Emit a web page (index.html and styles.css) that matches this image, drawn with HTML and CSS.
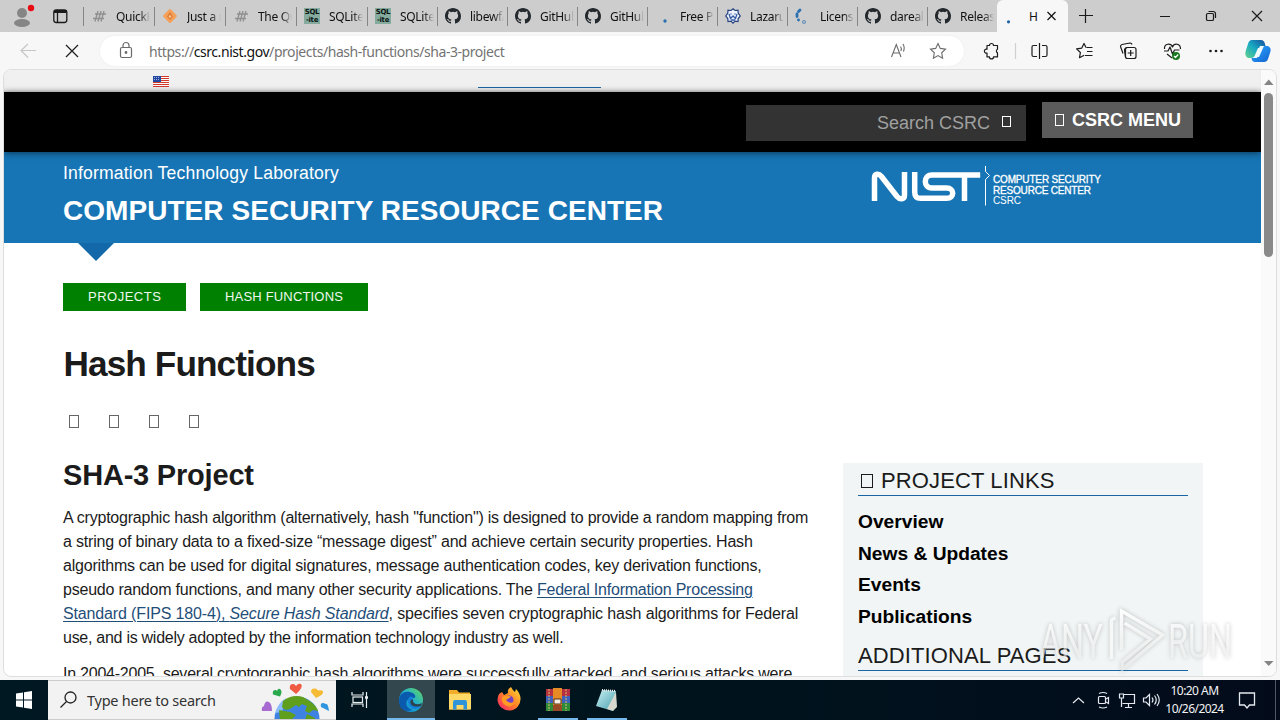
FILE: index.html
```html
<!DOCTYPE html>
<html lang="en">
<head>
<meta charset="utf-8">
<title>Hash Functions | CSRC</title>
<link rel="stylesheet" href="styles.css">
</head>
<body>
<svg width="0" height="0" class="defs">
  <defs>
    <symbol id="github" viewBox="0 0 16 16"><path fill="#24292e" d="M8 0C3.58 0 0 3.58 0 8c0 3.54 2.29 6.53 5.47 7.59.4.07.55-.17.55-.38 0-.19-.01-.82-.01-1.49-2.01.37-2.53-.49-2.69-.94-.09-.23-.48-.94-.82-1.13-.28-.15-.68-.52-.01-.53.63-.01 1.08.58 1.23.82.72 1.21 1.87.87 2.33.66.07-.52.28-.87.51-1.07-1.78-.2-3.64-.89-3.64-3.95 0-.87.31-1.59.82-2.15-.08-.2-.36-1.02.08-2.12 0 0 .67-.21 2.2.82a7.6 7.6 0 0 1 4 0c1.53-1.04 2.2-.82 2.2-.82.44 1.1.16 1.92.08 2.12.51.56.82 1.27.82 2.15 0 3.07-1.87 3.75-3.65 3.95.29.25.54.73.54 1.48 0 1.07-.01 1.93-.01 2.2 0 .21.15.46.55.38A8.01 8.01 0 0 0 16 8c0-4.42-3.58-8-8-8z"/></symbol>
    <symbol id="hash" viewBox="0 0 16 16"><path d="M4 6h11M2 10.500h11M7 3L4 13.500M10 3l-3 10.500M13 3l-3 10.500" stroke="#8f8f8f" stroke-width="1.300" fill="none"/></symbol>
  </defs>
</svg>
<div class="window">
  <div class="tabbar">
    <svg class="profile" width="36" height="32" viewBox="0 0 36 32"><circle cx="22" cy="13" r="5" fill="#858585"/><ellipse cx="22" cy="23" rx="8" ry="4" fill="#858585"/><circle cx="31" cy="8" r="3.200" fill="#e80c14"/></svg>
    <svg class="workspace" width="47" height="32" viewBox="36 0 47 32" fill="none" stroke="#1a1a1a" stroke-width="1.300"><rect x="53.800" y="9.800" width="13" height="12.700" rx="2.500"/><path d="M54 11.500h12.500" stroke-width="3"/><path d="M57.500 12v10"/></svg>
    <div class="tab w71"><svg class="fav"><use href="#hash"/></svg><span>QuickH</span></div>
    <div class="tab w71"><svg class="fav" viewBox="0 0 16 16"><rect x="2.700" y="2.700" width="10.600" height="10.600" rx="1.500" transform="rotate(45 8 8)" fill="#f3a15c"/><path d="M8 4l3 4.500-3 3.500-3-3.500z" fill="#e07a2d"/><circle cx="8" cy="8.500" r="1.300" fill="#f9c898"/></svg><span>Just a m</span></div>
    <div class="tab w71"><svg class="fav"><use href="#hash"/></svg><span>The Qui</span></div>
    <div class="tab w71"><div class="fav sql">SQL<br>-ite</div><span>SQLite F</span></div>
    <div class="tab w70"><div class="fav sql">SQL<br>-ite</div><span>SQLite F</span></div>
    <div class="tab w70"><svg class="fav"><use href="#github"/></svg><span>libewf/l</span></div>
    <div class="tab w70"><svg class="fav"><use href="#github"/></svg><span>GitHub</span></div>
    <div class="tab w70"><svg class="fav"><use href="#github"/></svg><span>GitHub</span></div>
    <div class="tab w70"><svg class="fav" viewBox="0 0 16 16"><circle cx="10" cy="13" r="1.700" fill="#2a6fb0"/></svg><span>Free Pa</span></div>
    <div class="tab w70"><svg class="fav" viewBox="0 0 16 16"><path d="M8 .8l2 1.700 3-.3.200 3L15.300 8l-2.100 2.500-.2 3-3-.3L8 15.200l-2-2-3 .3-.2-3L.7 8l2.100-2.800.2-3 3 .3z" fill="#eef3fd" stroke="#27427f" stroke-width="1.200"/><path d="M4 6l1.500 4.500L8 8l2.500 2.500L12 6M5.500 6h1M9.500 6h1M6 12h4" stroke="#3459a4" stroke-width="1.300" fill="none"/></svg><span>Lazarus</span></div>
    <div class="tab w70"><svg class="fav" viewBox="0 0 16 16" fill="none" stroke="#2a6fb0" stroke-width="2.800" stroke-linecap="round"><path d="M5 2L3.500 3.500M2 6v2.500M3.500 12v.1"/><circle cx="9" cy="14" r=".4"/></svg><span>License</span></div>
    <div class="tab w70"><svg class="fav"><use href="#github"/></svg><span>dareali</span></div>
    <div class="tab w70"><svg class="fav"><use href="#github"/></svg><span>Release</span></div>
    <div class="tab active"><svg class="fav" viewBox="0 0 16 16"><circle cx="3.500" cy="13.800" r="1.600" fill="#1f63a8"/></svg><span>H</span><svg width="12" height="12" viewBox="0 0 12 12" stroke="#111" stroke-width="1.200"><path d="M1.500 2l8 8M9.500 2l-8 8"/></svg></div>
    <svg class="controls" width="212" height="32" viewBox="1068 0 212 32" fill="none" stroke="#1a1a1a" stroke-width="1.200"><path d="M1079 15.500h14M1085.500 9v14M1160 16.500h10M1252 11l10 10M1262 11l-10 10"/><rect x="1206.500" y="13.500" width="7" height="7" rx="1.300"/><path d="M1208.500 11.500h4.500a2.500 2.500 0 0 1 2.500 2.500v4"/></svg>
  </div>
  <div class="toolbar">
    <svg width="100" height="37" viewBox="0 32 100 37" fill="none"><path d="M36 50.500H21M28 44l-7 6.500 7 7" stroke="#c6c6c6" stroke-width="1.200"/><path d="M66 45l12 12M78 45l-12 12" stroke="#222" stroke-width="1.300"/></svg>
    <div class="address">
      <svg width="16" height="20" viewBox="0 0 16 20" fill="none" stroke="#6b6b6b" stroke-width="1.200"><rect x="2.500" y="6.500" width="11" height="10" rx="1.500"/><path d="M5 6V4.500a3 3 0 0 1 6 0V6"/><circle cx="8" cy="11.500" r=".8" fill="#6b6b6b"/></svg>
      <span class="url">https://<b>csrc.nist.gov</b>/projects/hash-functions/sha-3-project</span>
      <svg width="76" height="30" viewBox="888 36 76 30" fill="none" stroke="#6b6b6b" stroke-width="1.100"><path d="M891.500 57l4.800-12.500L901 57M893 53h6.500M900.500 46.500a4 4 0 0 1 .3 4.500M903 44a8 8 0 0 1 .4 7.500"/><path d="M938 43.500l2.300 4.900 5.200.7-3.800 3.700.9 5.400-4.600-2.600-4.600 2.600.9-5.400-3.800-3.700 5.200-.7z"/></svg>
    </div>
    <svg width="316" height="37" viewBox="964 32 316 37" fill="none" stroke="#1c1c1c" stroke-width="1.200" stroke-linejoin="round">
      <path d="M987 45.500h2.500a2 2 0 0 1 4 0h4v3.800a2 2 0 0 0 0 3.600v4h-4a2 2 0 0 1-4 0H987V53a2 2 0 1 1 0-3.800z"/>
      <path d="M1015.500 43v16" stroke="#d0d0d0"/>
      <path d="M1037 45.500h-3.500a1.500 1.500 0 0 0-1.500 1.500v8a1.500 1.500 0 0 0 1.500 1.500h3.500M1042 45.500h3.500a1.500 1.500 0 0 1 1.500 1.500v8a1.500 1.500 0 0 1-1.500 1.500h-3.500M1039.500 43v16"/>
      <path d="M1086 47.500l-2-4-2.200 4.600-5.200.8 3.800 3.600-.9 5.200 4.700-2.400M1086.500 47.500h6M1087 51.500h5.500M1085 55.500h7.500"/>
      <path d="M1123 53.500l-2.500-7a2 2 0 0 1 1.500-2l8-1.500a2 2 0 0 1 2 1.500M1125.500 57l-1-6.500a3 3 0 0 1 3-3"/><rect x="1125.500" y="47.500" width="10.500" height="11" rx="2"/><path d="M1130.700 50v6M1127.700 53h6"/>
      <path d="M1164.500 49c-.5-6 6.500-6 8-2 1.500-4 8-4 8 2M1167 54l5 4M1164 51h4l2-4 2.500 7 2-4h5"/><circle cx="1176" cy="56" r="4" fill="#18771c" stroke="none"/><path d="M1174 56l1.500 1.500 2.700-3" stroke="#fff"/>
      <g fill="#1c1c1c" stroke="none"><circle cx="1210.500" cy="51" r="1.300"/><circle cx="1216" cy="51" r="1.300"/><circle cx="1221.500" cy="51" r="1.300"/></g>
      <g stroke="none"><path d="M1252 40h9q3 0 4 4l1 4h-8l-3 7q-1 3-4 3h-3q-4-2-2-8l2-6q1-4 4-4z" fill="url(#cop1)"/><path d="M1264 62h-9q-3 0-3.500-4l5.500 0 3-9q1-3 4-3h4q4 2 2 7l-2 6q-1 3-4 3z" fill="url(#cop2)"/><path d="M1260 46h4l-5 11h-4z" fill="#eefcff"/></g>
      <defs><linearGradient id="cop1" x1="0" y1="1" x2="1" y2="0"><stop stop-color="#62d28c"/><stop offset=".5" stop-color="#18a9c3"/><stop offset="1" stop-color="#164a9b"/></linearGradient><linearGradient id="cop2" x1="0" y1="0" x2="1" y2="1"><stop stop-color="#2aa8ff"/><stop offset="1" stop-color="#1463d0"/></linearGradient></defs>
    </svg>
  </div>
  <div class="viewport">
    <main class="page">
      <div class="gov">
        <svg width="16" height="11" viewBox="0 0 16 11"><path fill="#fff" d="M0 0h16v11H0z"/><path d="M0 .5h16M0 2.500h16M0 4.500h16M0 6.500h16M0 8.500h16M0 10.500h16" stroke="#d3392b"/><path fill="#2348a0" d="M0 0h8v6H0z"/><path d="M1 1.500h6M1 3.500h6" stroke="#b7c5ea" stroke-width=".8" stroke-dasharray="1 1"/></svg>
        <div class="gov-line"></div>
      </div>
      <header class="topnav">
        <div class="search"><span>Search CSRC</span><i class="glyph"></i></div>
        <div class="menu"><i class="glyph"></i><span>CSRC MENU</span></div>
      </header>
      <div class="banner">
        <div class="titles"><div class="itl">Information Technology Laboratory</div><div class="csrc">COMPUTER SECURITY RESOURCE CENTER</div></div>
        <svg class="nist" width="232" height="42" viewBox="871 165 232 42">
          <g fill="none" stroke="#fff" stroke-width="5.500"><path d="M874.500 201V178c0-4.500 4-5 7-1.500l15.500 20c3 3.500 7.500 3 7.500-1.500V172M914.700 172V192c0 4.500 2 6.300 6 6.300h26c8 0 8-10.300 0-10.300h-15c-8.500 0-8.500-13 0-13h48.500M964.500 175v26"/></g>
          <path d="M985.500 166v5.500l4 4-4 4v26" fill="none" stroke="#fff" stroke-width="1"/>
          <g fill="#fff" font-family="Liberation Sans, Arial, sans-serif" font-size="10"><text x="993" y="183" stroke="#fff" stroke-width=".3" textLength="108">COMPUTER SECURITY</text><text x="993" y="193.500" stroke="#fff" stroke-width=".3" textLength="98">RESOURCE CENTER</text><text x="993" y="204" textLength="28">CSRC</text></g>
        </svg>
      </div>
      <div class="notch"></div>
      <div class="crumbs"><span class="c1">PROJECTS</span><span class="c2">HASH FUNCTIONS</span></div>
      <h1>Hash Functions</h1>
      <div class="share"><i class="glyph"></i><i class="glyph"></i><i class="glyph"></i><i class="glyph"></i></div>
      <div class="columns">
        <article>
          <h2>SHA-3 Project</h2>
          <p><span class="l1">A cryptographic hash algorithm (alternatively, hash "function") is designed to provide a random mapping from</span><br><span class="l2">a string of binary data to a fixed-size “message digest” and achieve certain security properties. Hash</span><br><span class="l3">algorithms can be used for digital signatures, message authentication codes, key derivation functions,</span><br><span class="l4">pseudo random functions, and many other security applications. The <a>Federal Information Processing</a></span><br><span class="l5"><a>Standard (FIPS 180-4), <em>Secure Hash Standard</em></a>, specifies seven cryptographic hash algorithms for Federal</span><br><span class="l6">use, and is widely adopted by the information technology industry as well.</span></p>
          <p><span class="l7">In 2004-2005, several cryptographic hash algorithms were successfully attacked, and serious attacks were</span></p>
        </article>
        <aside>
          <h3 class="h-links"><i class="glyph"></i><span>PROJECT LINKS</span></h3>
          <ul><li>Overview</li><li>News &amp; Updates</li><li>Events</li><li>Publications</li></ul>
          <h3 class="h-pages"><span>ADDITIONAL PAGES</span></h3>
        </aside>
      </div>
    </main>
    <div class="scroll">
      <svg width="15" height="22" viewBox="0 0 15 22"><path d="M3 15h9.500L7.700 9.500z" fill="#858585"/></svg>
      <div class="thumb"></div>
      <svg width="15" height="22" viewBox="0 0 15 22"><path d="M3 7h9.500L7.700 12z" fill="#858585"/></svg>
    </div>
  </div>
  <svg class="watermark" width="204" height="70" viewBox="1034 605 204 70">
    <defs><linearGradient id="fade" x1="0" y1="0" x2="0" y2="1"><stop stop-color="#fff"/><stop offset="1" stop-color="#f4f4f4" stop-opacity=".6"/></linearGradient></defs>
    <g fill="url(#fade)" font-family="Roboto, sans-serif" font-size="48"><text x="1040" y="658" textLength="63" lengthAdjust="spacingAndGlyphs">ANY</text><text x="1168" y="658" textLength="64" lengthAdjust="spacingAndGlyphs">RUN</text></g>
    <path d="M1111.500 659v-38q0-2 4-3" fill="none" stroke="#fff" stroke-opacity=".85" stroke-width="3.500"/>
    <path d="M1121.500 650v-39l41 24-40 34v-7l28-23-26-16" fill="none" stroke="url(#fade)" stroke-width="3.500"/>
  </svg>
  <footer class="taskbar">
    <svg width="48" height="40" viewBox="0 0 48 40" fill="#fff"><path d="M16 13.500l7-1v7h-7zM24 12.300l8-1.300v8.500h-8zM16 20.500h7v7l-7-1zM24 20.500h8V29l-8-1.300z"/></svg>
    <div class="tsearch">
      <svg width="39" height="38" viewBox="48 681 39 38" fill="none" stroke="#222" stroke-width="1.300"><circle cx="70.500" cy="697.500" r="5.500"/><path d="M66.500 701.500l-6 6"/></svg>
      <span>Type here to search</span>
      <svg class="earth" width="76" height="38" viewBox="260 681 76 38"><circle cx="297" cy="719" r="22.500" fill="#3f83e2"/><path d="M275 713q3-10 11-15l-4 14z" fill="#8bbcff"/><path d="M283 701q9-7 20-4l8 5q7 6 7 9l-5-1-4 3-4-2 2-5-5-2-3 3-3-2-6 4q-6 2-8-2zM279 710l11 2 6 3-5 5h-11zM307 714l8 4v2h-10z" fill="#5f9f1b"/>
        <g><path d="M296 694l-6-5q-1-5 3-5 2 0 3 2 2-3 5-2 3 3-5 10z" fill="#f05c43"/><path d="M316 698l-5-6q0-4 4-3.500 2 0 3 2 4-1 5 1 1 3-7 6.500z" fill="#f6bb35"/><path d="M280 696.500l-7-2q-1-4 2-4.500 2 0 2 1 1-3 3-2 3 2 0 7.500z" fill="#2aa84c"/><path d="M272 711l-10 0q-1-4 2-5 1-6 5-4 3 2 3 9z" fill="#a66ad0"/><path d="M329 711l-8-4q-1-4 2-4 2 0 2 1 3-2 4 7z" fill="#3194df"/></g></svg>
    </div>
    <svg class="tasks" width="300" height="40" viewBox="336 680 300 40">
      <defs><linearGradient id="edge" x1="0" y1="1" x2="1" y2="0"><stop stop-color="#0875cf"/><stop offset=".5" stop-color="#1eaed2"/><stop offset="1" stop-color="#67d957"/></linearGradient><linearGradient id="fox" x1="1" y1="0" x2="0" y2="1"><stop stop-color="#ffe238"/><stop offset=".5" stop-color="#ff8126"/><stop offset="1" stop-color="#f01872"/></linearGradient><linearGradient id="note" x1="0" y1="0" x2="1" y2="1"><stop stop-color="#c9f1f3"/><stop offset="1" stop-color="#469fae"/></linearGradient></defs>
      <path d="M387 680h48v40h-48z" fill="#33474f"/>
      <path d="M387 718h48v2h-48zM538 718h40v2h-40zM587 718h40v2h-40z" fill="#76b9ed"/>
      <g fill="none" stroke="#e8eef0" stroke-width="1.200"><path d="M352 692v3h11v-3M352 707v-3h11v3M366.500 692v16"/><rect x="353" y="697" width="9.500" height="5.500"/><path d="M365 697.500h3" stroke-width="2.500"/></g>
      <circle cx="411" cy="700" r="12" fill="url(#edge)"/><path d="M399.500 704c-2-8 3-13 10-12 5 1 7 4 5 6-3 0-7 0-8 4s2 7 6 8c-7 2-12 0-13-6z" fill="#0a5aad"/><path d="M408 700q1-5 5-3-1 5 2 7 4 2 7 0-2 5-7 5-7-1-7-9z" fill="#1480d8"/><path d="M412 699q2 1 1 3 3 4 9 1l-1 3q-4 1-8 0-5-3-1-7z" fill="#2b444d"/>
      <path d="M449 690h8l2 2.500h11v17h-21z" fill="#f2ad28"/><path d="M449 694h22v15.500h-22z" fill="#ffd968"/><path d="M453 702q0-2 2-2h10q2 0 2 2v7.500h-3.500V705h-7v4.500H453z" fill="#2f94d9"/>
      <path d="M499 694l3-2 2 3 4-2q-1-4 3-6 2 4 4 5l1-3q4 4 4.500 9a11.500 11.500 0 1 1-23 2q0-3 1.500-6z" fill="url(#fox)"/><circle cx="509" cy="700" r="4.500" fill="#7140c7"/><path d="M502 697q5-3 9 0l-5 3q3 4 9 2-4 7-10 3-4-3-3-8z" fill="#ff9b23"/>
      <path d="M546 689h24v7h-24z" fill="#b7303f"/><path d="M546 696h24v7h-24z" fill="#3e61ba"/><path d="M546 703h24v8h-24z" fill="#2d8b39"/><path d="M553 688h9v23h-9z" fill="#e68a26"/><path d="M549 689v22M566 689v22" stroke="#e0bd75" stroke-width="1" stroke-dasharray="2 1"/><path d="M554 699h7v5h-7z" fill="#f4eee4" stroke="#523015"/><path d="M553 705h9v6h-9z" fill="#984b24"/>
      <path d="M602 690l14 1-2 18-1 2-17-5z" fill="url(#note)"/><path d="M616 692l1 15-4 4-6-2z" fill="#d7d9ce"/><path d="M602 690l14 1" stroke="#eee" stroke-width="2" stroke-dasharray="1 1"/>
    </svg>
    <div class="tray">
      <svg width="92" height="40" viewBox="1072 680 92 40" fill="none" stroke="#e6eaf0" stroke-width="1.200"><path d="M1073 703l5.500-5 5.500 5"/><rect x="1098.500" y="696.500" width="7" height="7" rx="1"/><path d="M1106 699l2.500-1.500v6L1106 702M1099 693.500q4-2 8 0M1099 707q4 2 8 0"/><path d="M1124 694.500h10.500v9h-12M1128.500 704v3M1125 707.500h7M1119.500 694h4v4h-4zM1121.500 698v9"/><path d="M1143.500 698h2.500l3.500-3.500v11L1146 702h-2.500zM1152 697.500q2 2.500 0 5M1154.500 695.500q3.500 4.500 0 9M1157 694q4.500 6 0 12"/></svg>
      <div class="clock"><span class="time">10:20 AM</span><span class="date">10/26/2024</span></div>
      <svg width="50" height="40" viewBox="1230 680 50 40" fill="none" stroke="#e6eaf0" stroke-width="1.300"><path d="M1239.500 693h15v12h-5l-2.500 3-2.500-3h-5z"/><path d="M1275.500 680v40" stroke="#4e5964" stroke-width="1"/></svg>
    </div>
  </footer>
</div>
</body>
</html>
```
FILE: styles.css
```css
* { box-sizing: border-box; }
body { margin: 0; width: 1280px; height: 720px; overflow: hidden; font-family: "Liberation Sans", Arial, sans-serif; }
svg { display: block; flex: none; }
.defs { position: absolute; }
.window { position: relative; display: flex; flex-direction: column; width: 1280px; height: 720px; background: #f7f7f7; }
.tabbar { display: flex; height: 32px; background: #cdcdcd; flex: none; }
.tab { display: flex; align-items: center; height: 32px; flex: none; overflow: hidden; font: 12px "Noto Sans", sans-serif; color: #111; white-space: nowrap; background: linear-gradient(#858585, #858585) 0 7px / 1px 19px no-repeat; padding-left: 8px; gap: 9px; }
.tab span { width: 34px; overflow: hidden; letter-spacing: -.3px; -webkit-mask-image: linear-gradient(90deg, #000 70%, transparent); mask-image: linear-gradient(90deg, #000 70%, transparent); }
.w71 { width: 71px; }
.w70 { width: 70px; }
.tab.active { width: 71px; background: #f7f7f7; border-radius: 6px 6px 0 0; }
.tab.active span { width: 8px; margin-left: -1px; letter-spacing: 0; overflow: visible; -webkit-mask-image: none; mask-image: none; }
.fav { width: 16px; height: 16px; flex: none; }
.sql { background: #85ab9f; color: #0b1512; font: bold 7px/8px "DejaVu Sans", sans-serif; letter-spacing: -.3px; text-align: center; }
.toolbar { display: flex; height: 37px; flex: none; }
.address { display: flex; align-items: center; width: 864px; height: 30px; margin-top: 4px; border-radius: 15px; background: #fff; padding-left: 18px; box-shadow: 0 0 2px #e8e8e8; }
.url { margin-left: 15px; flex: 1; color: #737373; font: 14px "Noto Sans", sans-serif; letter-spacing: -.44px; white-space: nowrap; }
.url b { font-weight: 400; color: #111; }
.viewport { display: flex; width: 1274px; height: 608px; margin-left: 3px; border: 1px solid #dedede; border-radius: 8px; overflow: hidden; background: #fff; flex: none; }
.page { width: 1257px; height: 606px; overflow: hidden; flex: none; }
.gov { display: flex; height: 22px; background: #f0f0f0; padding: 6px 0 0 149px; box-shadow: inset 0 -3px 4px -3px #bbb; }
.gov-line { width: 123px; height: 12px; margin-left: 309px; border-bottom: 1px solid #1a66a3; }
.topnav { display: flex; justify-content: flex-end; height: 60px; background: #000; padding-right: 68px; gap: 16px; position: relative; box-shadow: 0 1px 7px rgba(0,0,0,.55); }
.glyph { display: inline-block; border: 1px solid currentColor; width: 9px; height: 11px; flex: none; }
.search { display: flex; justify-content: flex-end; width: 280px; height: 36px; margin-top: 13px; padding: 0 15px 0 0; background: #333; color: #a0a0a0; font-size: 18px; line-height: 36px; }
.search .glyph { margin: 11px 0 0 12px; color: #fff; }
.menu { display: flex; align-items: center; width: 151px; height: 36px; margin-top: 10px; padding-left: 13px; background: #5b5b5b; color: #fff; font-weight: bold; font-size: 18px; gap: 8px; white-space: nowrap; }
.menu .glyph { height: 12px; }
.banner { display: flex; justify-content: space-between; height: 91px; padding: 0 158px 0 59px; background: #1775b5; color: #fff; }
.itl { margin-top: 10px; font-size: 17.6px; line-height: 22px; letter-spacing: .165px; }
.csrc { margin-top: 11px; font-size: 28px; line-height: 32px; letter-spacing: .05px; font-weight: bold; white-space: nowrap; }
.nist { margin-top: 13px; }
.notch { width: 36px; height: 18px; margin-left: 74px; background: #1268a8; clip-path: polygon(0 0, 100% 0, 50% 100%); }
.crumbs { display: flex; gap: 14px; padding: 22px 0 0 59px; }
.crumbs span { height: 28px; background: #008000; color: #f0f8f0; font-size: 13px; line-height: 27px; padding-left: 25px; white-space: nowrap; }
.crumbs .c1 { width: 123px; letter-spacing: .5px; }
.crumbs .c2 { width: 168px; letter-spacing: .18px; }
h1 { margin: 33px 0 0 59.500px; font-size: 35.2px; line-height: 40px; color: #1b1b1b; letter-spacing: -.9px; }
.share { display: flex; gap: 30px; margin: 31px 0 0 65px; }
.share .glyph { width: 10px; height: 13px; color: #666; }
.columns { display: flex; margin-top: 35px; padding-left: 59px; }
article { width: 780px; color: #1b1b1b; flex: none; }
h2 { margin: -6px 0 0; font-size: 29px; line-height: 36px; letter-spacing: -.2px; }
p { margin: 13px 0 12px; font-size: 16px; line-height: 24px; white-space: nowrap; }
p + p { margin-top: 0; }
.l1 { letter-spacing: -.22px; }
.l2 { letter-spacing: -.188px; }
.l3 { letter-spacing: -.198px; }
.l4 { letter-spacing: -.223px; }
.l5 { letter-spacing: -.143px; }
.l6 { letter-spacing: -.27px; }
.l7 { letter-spacing: -.233px; }
a { color: #1f4e79; text-decoration: underline; text-decoration-thickness: 1px; text-underline-offset: 2px; }
aside { width: 360px; height: 220px; background: #f1f5f5; padding: 0 15px; flex: none; }
h3 { display: flex; align-items: center; margin: 0; height: 33px; padding-top: 3px; border-bottom: 1px solid #1a66a3; font-weight: 400; font-size: 22px; letter-spacing: .12px; color: #1b1b1b; white-space: nowrap; }
h3 .glyph { width: 12px; height: 14px; margin: 1px 8px 0 3px; }
ul { list-style: none; margin: 10px 0 0; padding: 0; font-size: 19.2px; line-height: 31.700px; font-weight: bold; color: #000; }
.h-pages { margin-top: 0; height: 38px; padding-top: 9px; }
.scroll { width: 15px; height: 606px; display: flex; flex-direction: column; background: #fafafa; flex: none; }
.thumb { width: 9px; height: 164px; margin: 1px 0 auto 3px; border-radius: 5px; background: #898989; }
.watermark { position: absolute; left: 1034px; top: 605px; filter: drop-shadow(0 0 2px rgba(90,90,90,.5)); opacity: .8; }
.taskbar { display: flex; height: 40px; margin-top: 3px; background: linear-gradient(90deg, #001821, #00131d 60%, #030b1b); flex: none; }
.tsearch { display: flex; align-items: center; width: 288px; background: #f2f2f2; border: 1px solid #ccc; border-width: 1px 0; color: #333; font: 14.500px "Noto Sans", sans-serif; }
.tsearch span { flex: 1; white-space: nowrap; letter-spacing: -.25px; }
.tray { display: flex; margin-left: auto; }
.clock { width: 66px; padding: 2px 5px 0 0; color: #f3f3f3; font: 12px/18px "Noto Sans", sans-serif; display: flex; flex-direction: column; align-items: center; letter-spacing: -.55px; white-space: nowrap; }
```
